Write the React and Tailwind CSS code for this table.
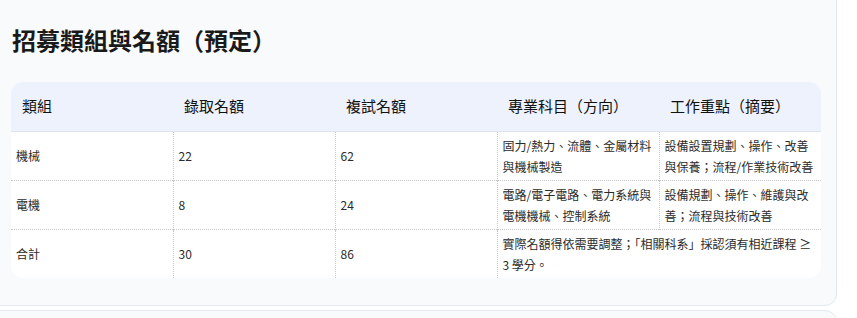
const rows = [
  { group: '機械', admit: '22', retest: '62', subject: '固力/熱力、流體、金屬材料與機械製造', focus: '設備設置規劃、操作、改善與保養；流程/作業技術改善' },
  { group: '電機', admit: '8', retest: '24', subject: '電路/電子電路、電力系統與電機機械、控制系統', focus: '設備規劃、操作、維護與改善；流程與技術改善' },
]

const headers = ['類組', '錄取名額', '複試名額', '專業科目（方向）', '工作重點（摘要）']

export default function App() {
  return (
    <div className="w-[857px] h-[318px] overflow-hidden bg-white text-[#222]" style={{ fontFamily: '"Noto Sans CJK TC", "Noto Sans", sans-serif' }}>
      {/* main card */}
      <div className="-ml-4 -mt-4 w-[853px] bg-[#f8fafc] border border-[#e2e8f0] rounded-xl pt-[39px] pl-[26px] pr-[14px] pb-[27px]">
        <h2 className="text-[24px] leading-[32px] font-bold text-[#1a1a1a] pl-px mb-[26px]">招募類組與名額（預定）</h2>

        <div className="bg-white rounded-xl overflow-hidden w-[810px]">
          <table className="w-full table-fixed border-collapse">
            <colgroup>
              {headers.map((h) => <col key={h} className="w-[162px]" />)}
            </colgroup>
            <thead>
              <tr className="bg-[#edf2fd] h-[49px] border-b border-[#dde5f3]">
                {headers.map((h) => (
                  <th key={h} className="text-left font-normal text-[15px] text-[#111] px-[11px] align-middle">{h}</th>
                ))}
              </tr>
            </thead>
            <tbody className="text-[12px] leading-[21px] text-[#2b2b2b]">
              {rows.map((r) => (
                <tr key={r.group} className="h-[49px] border-b border-dotted border-[#c6c6c6]">
                  <td className="px-[5px] py-[3px] align-middle">{r.group}</td>
                  <td className="px-[5px] py-[3px] align-middle border-l border-dotted border-[#c6c6c6]">{r.admit}</td>
                  <td className="px-[5px] py-[3px] align-middle border-l border-dotted border-[#c6c6c6]">{r.retest}</td>
                  <td className="px-[5px] py-[3px] align-middle border-l border-dotted border-[#c6c6c6]">{r.subject}</td>
                  <td className="px-[5px] py-[3px] align-middle border-l border-dotted border-[#c6c6c6]">{r.focus}</td>
                </tr>
              ))}
              <tr className="h-[49px]">
                <td className="px-[5px] py-[3px] align-middle">合計</td>
                <td className="px-[5px] py-[3px] align-middle border-l border-dotted border-[#c6c6c6]">30</td>
                <td className="px-[5px] py-[3px] align-middle border-l border-dotted border-[#c6c6c6]">86</td>
                <td colSpan={2} className="px-[5px] py-[3px] align-middle border-l border-dotted border-[#c6c6c6]">
                  實際名額得依需要調整；「相關科系」採認須有相近課程 ≥ 3 學分。
                </td>
              </tr>
            </tbody>
          </table>
        </div>
      </div>

      {/* next card */}
      <div className="-ml-4 mt-[4px] w-[853px] h-[40px] bg-[#f8fafc] border border-[#e2e8f0] rounded-xl" />
    </div>
  )
}
